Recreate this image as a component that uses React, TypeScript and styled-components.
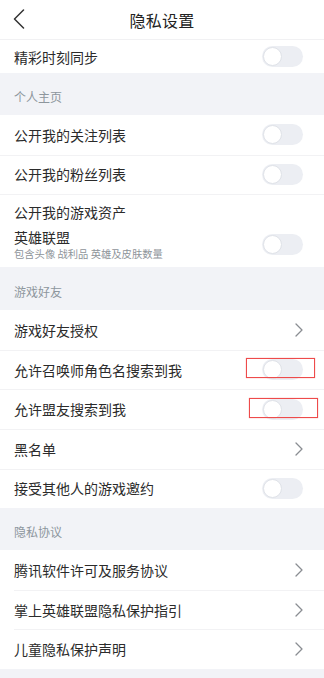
import React from "react";
import styled, { createGlobalStyle } from "styled-components";

const GlobalStyle = createGlobalStyle`
  html, body {
    margin: 0;
    padding: 0;
    background: #f2f3f7;
  }
  body {
    font-family: "Noto Sans CJK SC", "Noto Sans", sans-serif;
    color: #2b2b2b;
  }
`;

type Item = {
  label: string;
  kind: "toggle" | "link";
  mark?: { top: number; right: number };
};

type Section = {
  title: string;
  items: Item[];
  inset?: boolean;
};

const sections: Section[] = [
  {
    title: "游戏好友",
    items: [
      { label: "游戏好友授权", kind: "link" },
      { label: "允许召唤师角色名搜索到我", kind: "toggle", mark: { top: 8, right: 9 } },
      { label: "允许盟友搜索到我", kind: "toggle", mark: { top: 9, right: 6 } },
      { label: "黑名单", kind: "link" },
      { label: "接受其他人的游戏邀约", kind: "toggle" },
    ],
  },
  {
    title: "隐私协议",
    inset: true,
    items: [
      { label: "腾讯软件许可及服务协议", kind: "link" },
      { label: "掌上英雄联盟隐私保护指引", kind: "link" },
      { label: "儿童隐私保护声明", kind: "link" },
    ],
  },
];

const Toggle = () => (
  <Switch>
    <Knob />
  </Switch>
);

const Chevron = () => (
  <svg width="8" height="14" viewBox="0 0 8 14" fill="none">
    <path d="M1 1l6 6-6 6" stroke="#8a8d92" strokeWidth="1.3" strokeLinecap="round" strokeLinejoin="round" />
  </svg>
);

const App: React.FC = () => {
  return (
    <>
      <GlobalStyle />
      <Page>
        <Header>
          <BackBtn>
            <svg width="12" height="20" viewBox="0 0 12 20" fill="none">
              <path d="M10.5 1L1.5 10l9 9" stroke="#333" strokeWidth="1.5" strokeLinecap="round" strokeLinejoin="round" />
            </svg>
          </BackBtn>
          <Title>隐私设置</Title>
        </Header>

        <Group>
          <Row $h={33}>
            <Label>精彩时刻同步</Label>
            <Toggle />
          </Row>
        </Group>

        <SectionTitle $h={42}>个人主页</SectionTitle>
        <Group>
          <Row>
            <Label>公开我的关注列表</Label>
            <Toggle />
          </Row>
          <Row $divider>
            <Label>公开我的粉丝列表</Label>
            <Toggle />
          </Row>
          <AssetRow>
            <Label>公开我的游戏资产</Label>
            <AssetLine>
              <AssetText>
                <AssetName>英雄联盟</AssetName>
                <Sub>包含头像 战利品 英雄及皮肤数量</Sub>
              </AssetText>
              <Toggle />
            </AssetLine>
          </AssetRow>
        </Group>

        {sections.map((s) => (
          <React.Fragment key={s.title}>
            <SectionTitle $h={s.inset ? 42 : 43}>{s.title}</SectionTitle>
            <Group>
              {s.items.map((it, i) => (
                <Row key={it.label} $divider={i > 0} $inset={s.inset}>
                  <Label>{it.label}</Label>
                  {it.kind === "toggle" ? <Toggle /> : <Chevron />}
                  {it.mark && <Mark style={{ top: it.mark.top, right: it.mark.right }} />}
                </Row>
              ))}
            </Group>
          </React.Fragment>
        ))}
        <Footer />
      </Page>
    </>
  );
};

const Page = styled.div`
  width: 324px;
  min-height: 678px;
  background: #f2f3f7;
`;

const Header = styled.div`
  height: 40px;
  background: #fff;
  border-bottom: 1px solid #f1f1f3;
  box-sizing: border-box;
  position: relative;
  display: flex;
  align-items: center;
  justify-content: center;
`;

const BackBtn = styled.div`
  position: absolute;
  left: 13px;
  top: 9px;
  display: flex;
`;

const Title = styled.div`
  font-size: 16px;
  color: #222;
  letter-spacing: 0.2px;
`;

const Group = styled.div`
  background: #fff;
`;

const Row = styled.div<{ $h?: number; $divider?: boolean; $inset?: boolean }>`
  position: relative;
  height: ${(p) => p.$h ?? 39.6}px;
  box-sizing: border-box;
  display: flex;
  align-items: center;
  justify-content: space-between;
  padding: 0 21px 0 14px;
  ${(p) =>
    p.$divider &&
    `&::before {
      content: "";
      position: absolute;
      top: 0;
      left: ${p.$inset ? 14 : 0}px;
      right: 0;
      border-top: 1px solid #f2f2f4;
    }`}
`;

const Label = styled.div`
  font-size: 14px;
  line-height: 18px;
  color: #2b2b2b;
`;

const AssetRow = styled.div`
  position: relative;
  height: 73px;
  box-sizing: border-box;
  padding: 9px 21px 0 14px;
  &::before {
    content: "";
    position: absolute;
    top: 0;
    left: 0;
    right: 0;
    border-top: 1px solid #f2f2f4;
  }
`;

const AssetLine = styled.div`
  display: flex;
  align-items: center;
  justify-content: space-between;
  margin-top: 8px;
`;

const AssetText = styled.div`
  display: flex;
  flex-direction: column;
`;

const AssetName = styled.div`
  font-size: 14px;
  line-height: 16px;
  color: #2b2b2b;
`;

const Sub = styled.div`
  font-size: 10.3px;
  line-height: 13px;
  margin-top: 2px;
  color: #8e949a;
`;

const SectionTitle = styled.div<{ $h: number }>`
  height: ${(p) => p.$h}px;
  box-sizing: border-box;
  display: flex;
  align-items: flex-end;
  padding: 0 14px 11px;
  font-size: 12px;
  line-height: 14px;
  color: #8d969d;
`;

const Switch = styled.div`
  width: 41px;
  height: 21px;
  border-radius: 11px;
  background: #eceef3;
  display: flex;
  align-items: center;
  padding-left: 1px;
  box-sizing: border-box;
  flex-shrink: 0;
`;

const Knob = styled.div`
  width: 19px;
  height: 19px;
  border-radius: 50%;
  background: #fff;
  box-sizing: border-box;
  border: 1px solid #dfe2e8;
`;

const Mark = styled.div`
  position: absolute;
  width: 69px;
  height: 20px;
  box-sizing: border-box;
  border: 1px solid #ee4b4b;
  box-shadow: 0 0 1px rgba(238, 75, 75, 0.6);
  pointer-events: none;
`;

const Footer = styled.div`
  height: 10px;
`;

export default App;
